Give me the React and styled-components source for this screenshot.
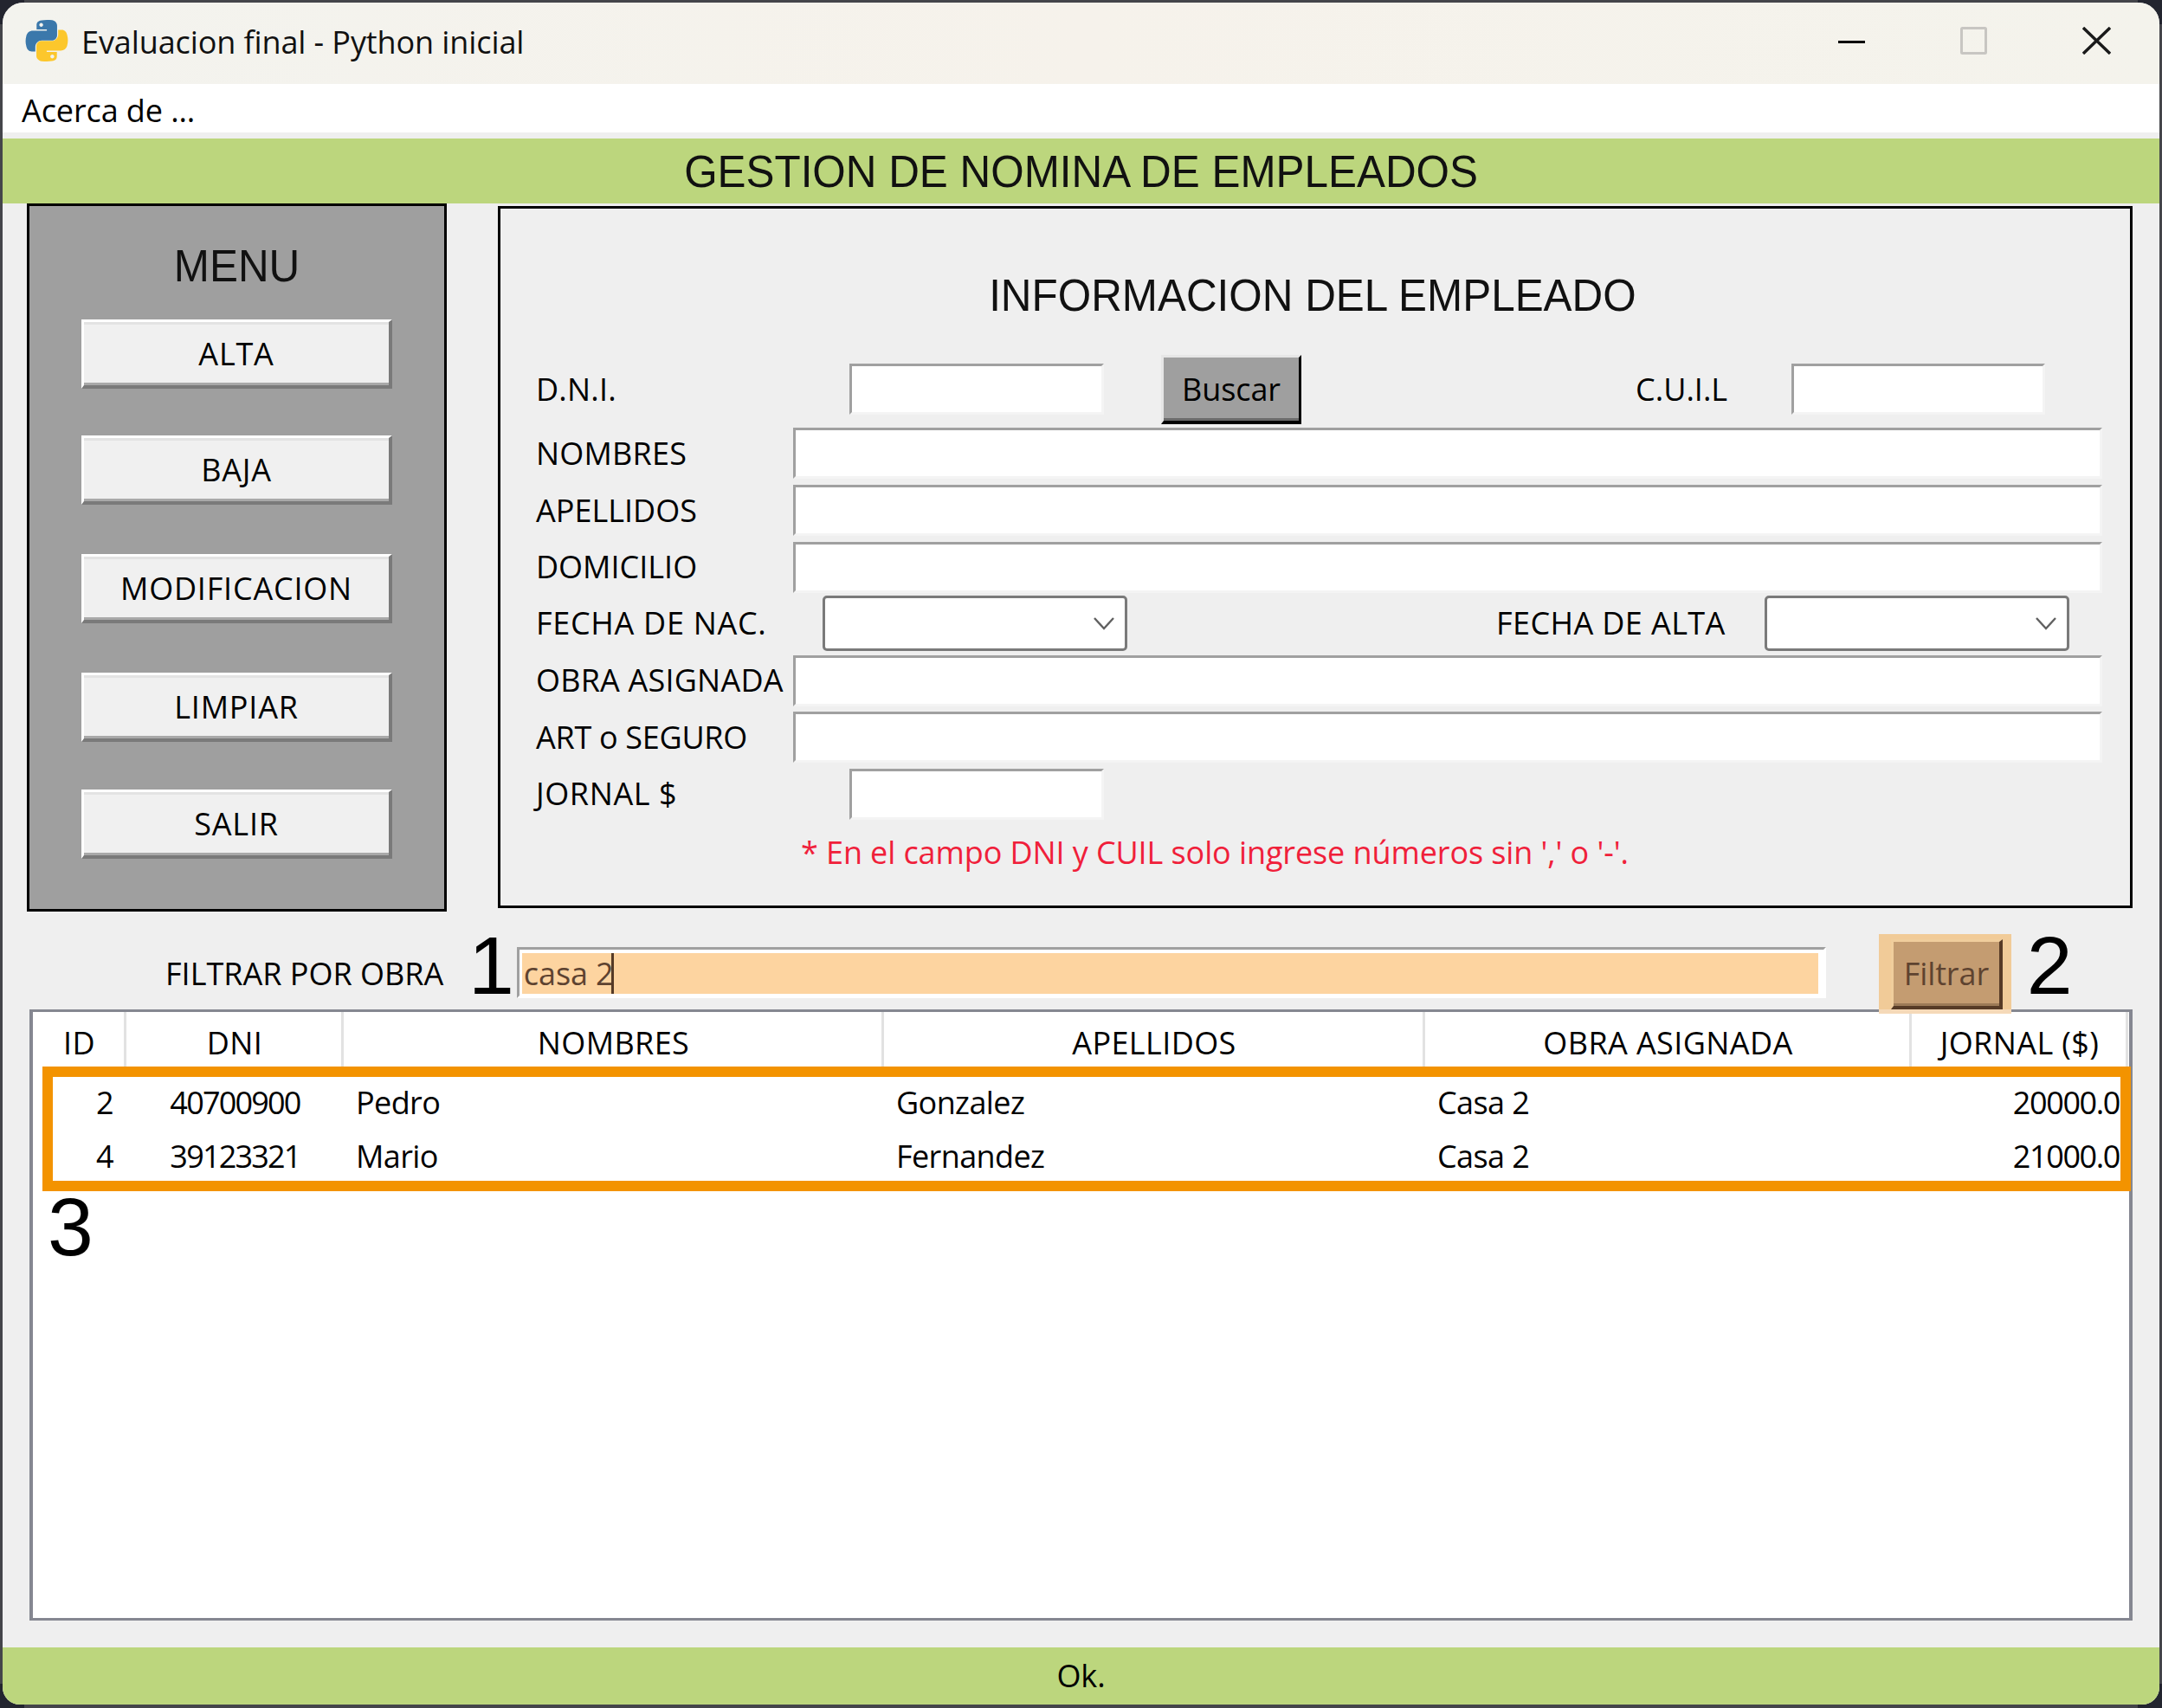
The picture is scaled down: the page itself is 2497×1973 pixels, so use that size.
import React from 'react';
import styled, { createGlobalStyle } from 'styled-components';

const GlobalStyle = createGlobalStyle`
  html, body {
    margin: 0;
    padding: 0;
    width: 2497px;
    height: 1973px;
    overflow: hidden;
  }
  body {
    background:
      linear-gradient(#23252f, #23252f) 0 0 / 28px 28px no-repeat,
      linear-gradient(#23252f, #23252f) 100% 0 / 28px 28px no-repeat,
      linear-gradient(#23252f, #23252f) 0 100% / 28px 28px no-repeat,
      linear-gradient(#23252f, #23252f) 100% 100% / 28px 28px no-repeat,
      #44454a;
    font-family: "Open Sans", "Noto Sans", sans-serif;
    color: #000;
  }
`;

const uiText = `
  font-family: "Open Sans", "Noto Sans", sans-serif;
  font-size: 36px;
  font-stretch: 90%;
  letter-spacing: -0.1px;
  line-height: 1;
  white-space: nowrap;
`;

// mayusculas: en la captura salen algo mas abiertas
const capsText = `
  ${uiText}
  letter-spacing: 0.2px;
`;

const headingText = `
  font-family: "Liberation Sans", Arial, sans-serif;
  font-size: 52px;
  line-height: 1;
  color: #111;
  white-space: nowrap;
  transform: scaleX(0.95);
`;

const Window = styled.div`
  position: relative;
  margin: 3px 0 0 3px;
  width: 2491px;
  height: 1966px;
  border-radius: 24px 24px 20px 20px;
  overflow: hidden;
  background: #efefef;
  display: flex;
  flex-direction: column;
`;

const TitleBar = styled.div`
  height: 94px;
  flex: none;
  display: flex;
  align-items: center;
  padding: 0 56px 6px 26px;
  box-sizing: border-box;
  background: linear-gradient(90deg, #f3f3ee, #f6f2eb 50%, #f4f3ec);
`;

const TitleText = styled.span`
  ${uiText}
  margin-left: 15px;
  padding-top: 4px;
  color: #111;
  flex: 1;
`;

const WindowControls = styled.div`
  display: flex;
  align-items: center;
  gap: 110px;
`;

const MenuBar = styled.div`
  height: 56px;
  flex: none;
  background: #fff;
  display: flex;
  align-items: center;
  padding: 6px 0 0 22px;
  box-sizing: border-box;
  ${uiText}
`;

const Banner = styled.div`
  flex: none;
  height: ${(p) => p.$h}px;
  margin-top: ${(p) => p.$mt}px;
  background: #bcd67d;
  display: flex;
  align-items: center;
  justify-content: center;
`;

const BannerTitle = styled.span`
  ${headingText}
`;

const StatusText = styled.span`
  ${uiText}
`;

const Main = styled.div`
  display: flex;
  align-items: flex-start;
  flex: none;
  padding-left: 28px;
`;

const SidePanel = styled.div`
  width: 485px;
  height: 818px;
  box-sizing: border-box;
  border: 3px solid #000;
  background: #9f9f9f;
  display: flex;
  flex-direction: column;
  align-items: center;
  padding-top: 42px;
`;

const PanelTitle = styled.div`
  ${headingText}
  line-height: 54px;
`;

const MenuButtons = styled.div`
  margin-top: 35px;
  display: flex;
  flex-direction: column;
`;

const MenuButton = styled.button`
  ${capsText}
  letter-spacing: 0.8px;
  width: 359px;
  height: 80px;
  margin-top: ${(p) => p.$mt}px;
  padding: 0;
  box-sizing: border-box;
  background: #f0f0f0;
  border-style: solid;
  border-width: 3px 4px 4px 3px;
  border-color: #fff #7a7a7a #7a7a7a #fff;
  box-shadow: inset 0 3px 0 #e3e3e3, inset 0 -3px 0 #a9a9a9;
  color: #000;
`;

const InfoPanel = styled.div`
  margin: 3px 0 0 59px;
  width: 1888px;
  height: 811px;
  box-sizing: border-box;
  border: 3px solid #000;
  padding: 0 32px 0 41px;
`;

const InfoTitle = styled.div`
  ${headingText}
  line-height: 60px;
  height: 60px;
  margin-top: 70px;
  text-align: center;
  padding-right: 16px;
`;

const FormRow = styled.div`
  display: flex;
  align-items: center;
  height: ${(p) => p.$h}px;
  margin-top: ${(p) => p.$mt}px;
`;

const Label = styled.label`
  ${capsText}
  flex: none;
  width: ${(p) => (p.$w ? `${p.$w}px` : 'auto')};
  margin-left: ${(p) => p.$ml || 0}px;
  letter-spacing: ${(p) => p.$spacing ?? 0.2}px;
`;

const TextField = styled.div`
  flex: ${(p) => (p.$w ? 'none' : '1')};
  width: ${(p) => (p.$w ? `${p.$w}px` : 'auto')};
  height: 59px;
  margin-left: ${(p) => p.$ml || 0}px;
  margin-bottom: ${(p) => p.$mb || 0}px;
  box-sizing: border-box;
  background: #fff;
  border-style: solid;
  border-width: 3px;
  border-color: #a0a0a0 #f4f4f4 #f4f4f4 #a0a0a0;
`;

const ComboBox = styled.div`
  flex: none;
  width: 352px;
  height: 64px;
  margin-left: ${(p) => p.$ml || 0}px;
  box-sizing: border-box;
  background: #fff;
  border: 3px solid #7a7a7a;
  border-radius: 5px;
  display: flex;
  align-items: center;
  justify-content: flex-end;
  padding-right: 11px;
`;

const SearchButton = styled.button`
  ${uiText}
  flex: none;
  width: 162px;
  height: 80px;
  margin-left: 66px;
  padding: 0;
  box-sizing: border-box;
  background: #9f9f9f;
  border-style: solid;
  border-width: 3px 3px 4px 3px;
  border-color: #e6e6e6 #000 #000 #e6e6e6;
  box-shadow: inset 0 -3px 0 #6b6b6b;
  color: #000;
`;

const Warning = styled.div`
  ${uiText}
  color: #f0203a;
  margin: 18px 0 0 306px;
  height: 40px;
  line-height: 40px;
`;

const FilterRow = styled.div`
  position: relative;
  z-index: 1;
  flex: none;
  display: flex;
  align-items: flex-start;
  height: 87px;
  margin-top: 26px;
`;

const FilterLabel = styled.label`
  ${capsText}
  letter-spacing: 0;
  flex: none;
  width: 350px;
  margin: 28px 0 0 188px;
`;

const Marker = styled.span`
  font-family: "Liberation Sans", Arial, sans-serif;
  font-size: 95px;
  line-height: 73px;
  color: #000;
  flex: none;
  margin-left: ${(p) => p.$ml || 0}px;
`;

const FilterInput = styled.div`
  flex: none;
  width: 1512px;
  height: 59px;
  margin: 15px 0 0 3px;
  box-sizing: border-box;
  background: #fff;
  border-style: solid;
  border-width: 3px;
  border-color: #a0a0a0 #fff #fff #a0a0a0;
  padding: 4px 6px 2px 3px;
`;

const FilterHighlight = styled.div`
  height: 47px;
  background: #fdd4a0;
  display: flex;
  align-items: center;
  padding-left: 2px;
  ${uiText}
  color: #5e4330;
`;

const Caret = styled.span`
  display: inline-block;
  width: 3px;
  height: 47px;
  background: #553a26;
  margin-left: -3px;
`;

const FilterHalo = styled.div`
  flex: none;
  width: 153px;
  height: 92px;
  margin-left: 61px;
  box-sizing: border-box;
  padding: 6px 10px 5px 14px;
  background: linear-gradient(#f1cb98 87px, #f5d9b8 87px);
`;

const FilterButton = styled.button`
  ${uiText}
  width: 129px;
  height: 81px;
  padding: 0;
  box-sizing: border-box;
  background: #c49c71;
  border-style: solid;
  border-width: 3px 4px 4px 3px;
  border-color: #f0cd9c #573b26 #573b26 #f0cd9c;
  box-shadow: inset 0 -3px 0 #9c7a57;
  color: #5e4330;
`;

const Table = styled.div`
  position: relative;
  flex: none;
  margin-left: 31px;
  width: 2429px;
  height: 706px;
  box-sizing: border-box;
  background: #fff;
  border-style: solid;
  border-width: 3px 4px 3px 4px;
  border-color: #858791;
`;

const HeaderRow = styled.div`
  display: grid;
  grid-template-columns: 108px 251px 624px 625px 562px 250px;
  height: 63px;
`;

const HeaderCell = styled.div`
  ${capsText}
  letter-spacing: 0.4px;
  display: flex;
  align-items: center;
  justify-content: center;
  padding: 9px 0 0 2px;
  box-sizing: border-box;
  border-right: 3px solid #e2e2e2;
`;

const ResultBox = styled.div`
  margin: 0 -2px 0 11px;
  height: 144px;
  box-sizing: border-box;
  border: 12px solid #f39300;
`;

const ResultRow = styled.div`
  display: grid;
  grid-template-columns: 85px 251px 624px 625px 562px 240px;
  height: 62px;
  margin-top: ${(p) => (p.$first ? -1 : 0)}px;
`;

const Cell = styled.div`
  ${uiText}
  display: flex;
  align-items: center;
  justify-content: ${(p) => p.$align || 'flex-start'};
  padding: ${(p) => (p.$align ? '0' : '0 0 0 14px')};
  letter-spacing: ${(p) => p.$spacing ?? -0.6}px;
  &:first-child {
    padding-right: 15px;
  }
`;

const CalloutThree = styled.span`
  position: absolute;
  left: 17px;
  top: 212px;
  font-family: "Liberation Sans", Arial, sans-serif;
  font-size: 95px;
  line-height: 73px;
  color: #000;
`;

const PythonLogo = () => (
  <svg width="50" height="50" viewBox="0 0 110 110">
    <path
      fill="#3b78ab"
      d="M54.9 2c-4.5 0-8.8.4-12.6 1.1C31.2 5 29.2 9.1 29.2 16.6v9.9h26v3.3H19.4c-7.6 0-14.2 4.5-16.3 13.1-2.4 9.9-2.5 16.1 0 26.4 1.8 7.7 6.3 13.1 13.9 13.1h9v-11.9c0-8.6 7.4-16.1 16.3-16.1h26c7.2 0 13-6 13-13.2V16.6c0-7.1-6-12.4-13-13.6C63.8 2.3 59.3 2 54.9 2zM40.9 10c2.7 0 4.9 2.2 4.9 5 0 2.7-2.2 4.9-4.9 4.9-2.7 0-4.9-2.2-4.9-4.9 0-2.8 2.2-5 4.9-5z"
    />
    <path
      fill="#fcc72c"
      transform="rotate(180 55 55)"
      d="M54.9 2c-4.5 0-8.8.4-12.6 1.1C31.2 5 29.2 9.1 29.2 16.6v9.9h26v3.3H19.4c-7.6 0-14.2 4.5-16.3 13.1-2.4 9.9-2.5 16.1 0 26.4 1.8 7.7 6.3 13.1 13.9 13.1h9v-11.9c0-8.6 7.4-16.1 16.3-16.1h26c7.2 0 13-6 13-13.2V16.6c0-7.1-6-12.4-13-13.6C63.8 2.3 59.3 2 54.9 2zM40.9 10c2.7 0 4.9 2.2 4.9 5 0 2.7-2.2 4.9-4.9 4.9-2.7 0-4.9-2.2-4.9-4.9 0-2.8 2.2-5 4.9-5z"
    />
  </svg>
);

const MinimizeIcon = () => (
  <svg width="31" height="32" viewBox="0 0 31 32">
    <rect x="0" y="16" width="31" height="3" fill="#000" />
  </svg>
);

const MaximizeIcon = () => (
  <svg width="31" height="32" viewBox="0 0 31 32">
    <rect x="1.5" y="1.5" width="28" height="29" rx="1" fill="none" stroke="#c8c6c2" strokeWidth="3" />
  </svg>
);

const CloseIcon = () => (
  <svg width="33" height="32" viewBox="0 0 33 32">
    <path d="M1 1 L32 31 M32 1 L1 31" stroke="#1a1a1a" strokeWidth="3.4" fill="none" />
  </svg>
);

const Chevron = () => (
  <svg width="26" height="16" viewBox="0 0 26 16">
    <path d="M2 2 L13 14 L24 2" stroke="#606060" strokeWidth="2.4" fill="none" />
  </svg>
);

const menuItems = [
  { label: 'ALTA', gap: 0 },
  { label: 'BAJA', gap: 54 },
  { label: 'MODIFICACION', gap: 57 },
  { label: 'LIMPIAR', gap: 57 },
  { label: 'SALIR', gap: 55 },
];

const headers = ['ID', 'DNI', 'NOMBRES', 'APELLIDOS', 'OBRA ASIGNADA', 'JORNAL ($)'];

const employees = [
  { id: 2, dni: '40700900', name: 'Pedro', last: 'Gonzalez', site: 'Casa 2', pay: '20000.0' },
  { id: 4, dni: '39123321', name: 'Mario', last: 'Fernandez', site: 'Casa 2', pay: '21000.0' },
];

const App = () => {
  return (
    <>
      <GlobalStyle />
      <Window>
        <TitleBar>
          <PythonLogo />
          <TitleText>Evaluacion final - Python inicial</TitleText>
          <WindowControls>
            <MinimizeIcon />
            <MaximizeIcon />
            <CloseIcon />
          </WindowControls>
        </TitleBar>
        <MenuBar>Acerca de ...</MenuBar>
        <Banner $h={75} $mt={7}>
          <BannerTitle>GESTION DE NOMINA DE EMPLEADOS</BannerTitle>
        </Banner>

        <Main>
          <SidePanel>
            <PanelTitle>MENU</PanelTitle>
            <MenuButtons>
              {menuItems.map((item) => (
                <MenuButton key={item.label} $mt={item.gap}>{item.label}</MenuButton>
              ))}
            </MenuButtons>
          </SidePanel>

          <InfoPanel>
            <InfoTitle>INFORMACION DEL EMPLEADO</InfoTitle>
            <FormRow $h={80} $mt={39}>
              <Label $w={362}>D.N.I.</Label>
              <TextField $w={294} $mb={2} />
              <SearchButton>Buscar</SearchButton>
              <Label $ml={386} $w={180} $spacing={0}>C.U.I.L</Label>
              <TextField $w={293} $mb={2} />
            </FormRow>
            <FormRow $h={59} $mt={4}>
              <Label $w={297}>NOMBRES</Label>
              <TextField />
            </FormRow>
            <FormRow $h={59} $mt={7}>
              <Label $w={297} $spacing={0}>APELLIDOS</Label>
              <TextField />
            </FormRow>
            <FormRow $h={60} $mt={6}>
              <Label $w={297} $spacing={0}>DOMICILIO</Label>
              <TextField />
            </FormRow>
            <FormRow $h={64} $mt={3}>
              <Label $w={331} $spacing={0.7}>FECHA DE NAC.</Label>
              <ComboBox><Chevron /></ComboBox>
              <Label $ml={426} $w={310} $spacing={0.4}>FECHA DE ALTA</Label>
              <ComboBox><Chevron /></ComboBox>
            </FormRow>
            <FormRow $h={60} $mt={4}>
              <Label $w={297}>OBRA ASIGNADA</Label>
              <TextField />
            </FormRow>
            <FormRow $h={59} $mt={6}>
              <Label $w={297} $spacing={-0.3}>ART o SEGURO</Label>
              <TextField />
            </FormRow>
            <FormRow $h={60} $mt={6}>
              <Label $w={362} $spacing={0.6}>JORNAL $</Label>
              <TextField $w={294} />
            </FormRow>
            <Warning>* En el campo DNI y CUIL solo ingrese números sin ',' o '-'.</Warning>
          </InfoPanel>
        </Main>

        <FilterRow>
          <FilterLabel>FILTRAR POR OBRA</FilterLabel>
          <Marker>1</Marker>
          <FilterInput>
            <FilterHighlight>
              casa 2<Caret />
            </FilterHighlight>
          </FilterInput>
          <FilterHalo>
            <FilterButton>Filtrar</FilterButton>
          </FilterHalo>
          <Marker $ml={18}>2</Marker>
        </FilterRow>

        <Table>
          <HeaderRow>
            {headers.map((h) => (
              <HeaderCell key={h}>{h}</HeaderCell>
            ))}
          </HeaderRow>
          <ResultBox>
            {employees.map((e, i) => (
              <ResultRow key={e.id} $first={i === 0}>
                <Cell $align="flex-end">{e.id}</Cell>
                <Cell $align="center" $spacing={-1.8}>{e.dni}</Cell>
                <Cell>{e.name}</Cell>
                <Cell>{e.last}</Cell>
                <Cell>{e.site}</Cell>
                <Cell $align="flex-end" $spacing={-1.4}>{e.pay}</Cell>
              </ResultRow>
            ))}
          </ResultBox>
          <CalloutThree>3</CalloutThree>
        </Table>

        <Banner $h={66} $mt={31}>
          <StatusText>Ok.</StatusText>
        </Banner>
      </Window>
    </>
  );
};

export default App;
